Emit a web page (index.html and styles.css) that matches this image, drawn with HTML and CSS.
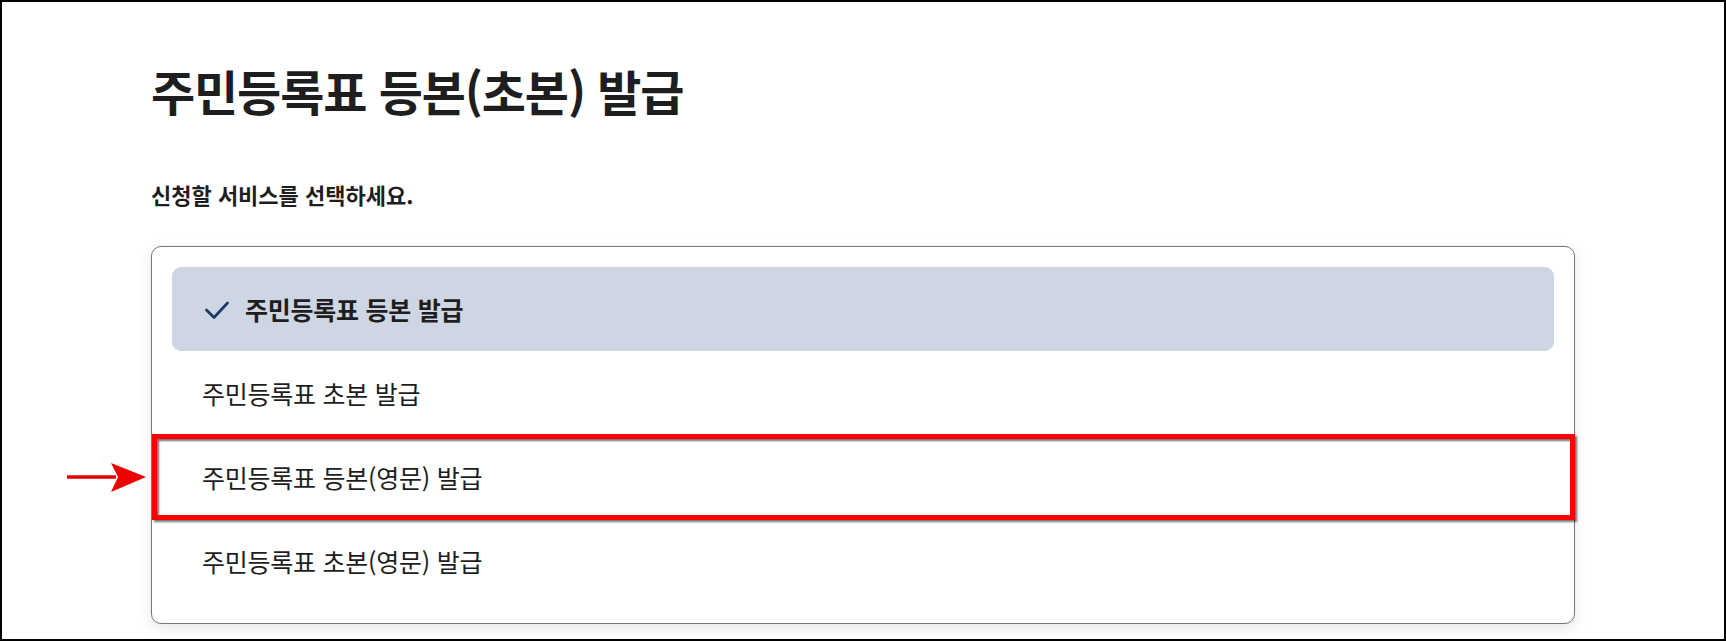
FILE: index.html
```html
<!DOCTYPE html>
<html lang="ko">
<head>
<meta charset="utf-8">
<title>주민등록표 등본(초본) 발급</title>
<link rel="stylesheet" href="styles.css">
</head>
<body>
<div class="frame">
  <main class="container">
    <h1 class="title">주민등록표 등본(초본) 발급</h1>
    <p class="subtitle">신청할 서비스를 선택하세요.</p>
    <ul class="options">
      <li class="option selected">
        <svg class="check" width="26" height="24" viewBox="0 0 26 24" aria-hidden="true">
          <polyline points="2.5,13 10,20.5 23.5,6" fill="none" stroke="#1b3b6c" stroke-width="2.8" stroke-linecap="round" stroke-linejoin="round"/>
        </svg>
        <span>주민등록표 등본 발급</span>
      </li>
      <li class="option">주민등록표 초본 발급</li>
      <li class="option highlighted">
        <svg class="arrow" width="82" height="32" viewBox="0 0 82 32" aria-hidden="true">
          <line x1="1" y1="15" x2="50" y2="15" stroke="#e30000" stroke-width="3.5"/>
          <polygon points="45,1 80,15 45,30 52,15" fill="#f00000"/>
        </svg>
        주민등록표 등본(영문) 발급
      </li>
      <li class="option">주민등록표 초본(영문) 발급</li>
    </ul>
  </main>
</div>
</body>
</html>
```

FILE: styles.css
```css
html, body {
  margin: 0;
  padding: 0;
  background: #ffffff;
}

body {
  font-family: "Noto Sans CJK KR", "Noto Sans", sans-serif;
  color: #1e1e1e;
}

.frame {
  box-sizing: border-box;
  height: 641px;
  border: 2px solid #000000;
  overflow: hidden;
}

.container {
  width: 1424px;
  margin: 0 auto;
  padding-top: 59px;
}

.title {
  margin: 0;
  font-size: 48px;
  line-height: 58px;
  font-weight: 700;
  letter-spacing: -1.1px;
  color: #1e1e1e;
}

.subtitle {
  margin: 60px 0 0;
  font-size: 22px;
  line-height: 30px;
  font-weight: 700;
  letter-spacing: 0;
  color: #1e1e1e;
}

.options {
  list-style: none;
  margin: 37px 0 0;
  padding: 20px 20px 20px;
  border: 1px solid #767676;
  border-radius: 10px;
  background: #ffffff;
  box-shadow: 0 4px 14px rgba(0, 0, 0, 0.10);
}

.option {
  position: relative;
  display: flex;
  align-items: center;
  height: 84px;
  padding: 0 30px;
  font-size: 25px;
  font-weight: 400;
  letter-spacing: -0.25px;
  color: #1e1e1e;
}

.option.selected {
  background: #cdd6e2;
  border-radius: 9px;
  font-weight: 700;
  padding-left: 32px;
  gap: 15px;
}

.check {
  display: block;
  flex: none;
}

.highlighted::after {
  content: "";
  position: absolute;
  top: -1px;
  bottom: -1px;
  left: -20px;
  right: -21px;
  border: 5px solid #ff0000;
  box-shadow: 2px 2px 2px rgba(0, 0, 0, 0.55), inset 2px 2px 2px rgba(0, 0, 0, 0.55);
  pointer-events: none;
}

.arrow {
  position: absolute;
  left: -106px;
  top: 27px;
}
```
